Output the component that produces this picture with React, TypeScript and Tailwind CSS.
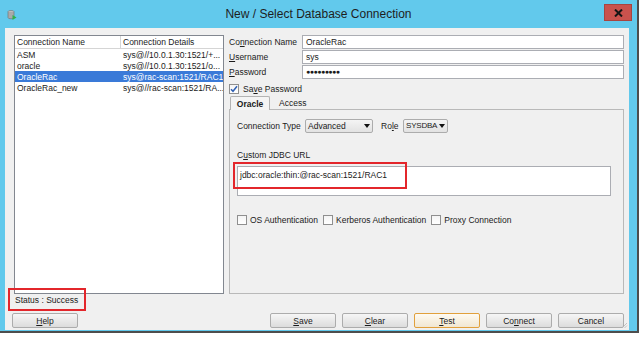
import type { ReactNode } from "react";

const connections = [
  { name: "ASM", details: "sys@//10.0.1.30:1521/+...", selected: false },
  { name: "oracle", details: "sys@//10.0.1.30:1521/o...", selected: false },
  { name: "OracleRac", details: "sys@rac-scan:1521/RAC1", selected: true },
  { name: "OracleRac_new", details: "sys@//rac-scan:1521/RA...", selected: false },
];

// underlined mnemonic letter
const Mn = ({ c }: { c: string }) => (
  <span className="underline decoration-[1px] underline-offset-[1px]">{c}</span>
);

const Checkbox = ({ checked }: { checked?: boolean }) => (
  <span className="flex h-[10px] w-[10px] shrink-0 items-center justify-center border border-[#8f8f8f] bg-linear-to-b from-[#f4f4f4] to-white">
    {checked && (
      <svg width="8" height="8" viewBox="0 0 8 8">
        <path d="M1 4.2 L3 6.3 L7 1.3" fill="none" stroke="#2f5fb3" strokeWidth="1.5" />
      </svg>
    )}
  </span>
);

const Select = ({ value, width, textClass = "" }: { value: string; width: string; textClass?: string }) => (
  <div
    className={`flex h-[14px] ${width} items-center justify-between gap-[1px] rounded-[2px] border border-[#acacac] bg-linear-to-b from-[#f4f4f4] to-[#e2e2e2] pl-[2px] pr-[2px]`}
  >
    <span className={`whitespace-nowrap ${textClass}`}>{value}</span>
    <svg className="shrink-0" width="6" height="4" viewBox="0 0 6 4">
      <path d="M0 0 H6 L3 4 Z" fill="#111" />
    </svg>
  </div>
);

const Btn = ({ children, focus, className = "" }: { children: ReactNode; focus?: boolean; className?: string }) => (
  <div
    className={`flex h-[15px] w-[66px] items-center justify-center rounded-[2px] border ${
      focus
        ? "border-[#e1a03c] bg-linear-to-b from-[#fefaf2] to-[#f1e7d2]"
        : "border-[#acacac] bg-linear-to-b from-[#f6f6f6] to-[#dcdcdc]"
    } ${className}`}
  >
    {children}
  </div>
);

const Field = ({ children }: { children?: ReactNode }) => (
  <div className="flex h-[14px] flex-1 items-center border border-[#abadb3] bg-white pl-[3px]">{children}</div>
);

const App = () => {
  return (
    <div className="relative h-[338px] w-[644px] overflow-hidden bg-white font-['Liberation_Sans',Arial,sans-serif] text-[8.5px] leading-[10px] text-[#1b1b1b]">
      <div className="flex h-[333px] w-[639px] flex-col border-r-2 border-b-2 border-[#4d4d4d] bg-[#62c9ec]">
        {/* title bar */}
        <div className="grid h-[28px] grid-cols-[1fr_auto_1fr]">
          <div className="ml-[7px] mt-[10px] justify-self-start">
            <svg width="10" height="10" viewBox="0 0 10 10">
              <ellipse cx="4" cy="1.8" rx="3" ry="1.3" fill="#c8c8c8" stroke="#6b6b6b" strokeWidth="0.6" />
              <path d="M1 1.8 V7.5 A3 1.3 0 0 0 7 7.5 V1.8" fill="#a9a9a9" stroke="#6b6b6b" strokeWidth="0.6" />
              <path d="M5.5 5 L9.5 7.5 L5.5 10 Z" fill="#2fb24a" />
            </svg>
          </div>
          <div className="flex items-center text-[12px] leading-[14px] text-[#1e1e1e]">New / Select Database Connection</div>
          <div className="mr-[5px] mt-[4px] flex h-[17px] w-[28px] items-center justify-center justify-self-end border border-[#a84440] bg-[#c9524d]">
            <svg width="9" height="8" viewBox="0 0 9 8">
              <path d="M1 0.5 L8 7.5 M8 0.5 L1 7.5" stroke="#151515" strokeWidth="2" />
            </svg>
          </div>
        </div>

        {/* body */}
        <div className="relative ml-[5px] mr-[8px] flex h-[302px] flex-col bg-[#f0f0f0] pl-[7px] pr-[5px] pt-[7px]">
          <div className="flex h-[259px] gap-[5px]">
            {/* connection list */}
            <div className="ml-[2px] flex w-[210px] flex-col border border-[#828790] bg-white">
              <div className="flex h-[13px] border-b border-[#d5d5d5]">
                <div className="flex w-[106px] items-center border-r border-[#d5d5d5] pl-[2px]">Connection Name</div>
                <div className="flex flex-1 items-center pl-[2px]">Connection Details</div>
              </div>
              {connections.map((c) => (
                <div
                  key={c.name}
                  className={`flex h-[11px] items-center whitespace-nowrap ${c.selected ? "bg-[#3a7ad8] text-white" : ""}`}
                >
                  <div className="w-[106px] overflow-hidden pl-[2px]">{c.name}</div>
                  <div className="flex-1 overflow-hidden pl-[2px]">{c.details}</div>
                </div>
              ))}
            </div>

            {/* connection form */}
            <div className="flex flex-1 flex-col">
              <div className="flex flex-col gap-[1px]">
                <div className="flex items-center">
                  <span className="w-[73px]">
                    Co<Mn c="n" />nection Name
                  </span>
                  <Field>OracleRac</Field>
                </div>
                <div className="flex items-center">
                  <span className="w-[73px]">
                    <Mn c="U" />sername
                  </span>
                  <Field>sys</Field>
                </div>
                <div className="flex items-center">
                  <span className="w-[73px]">
                    <Mn c="P" />assword
                  </span>
                  <Field>
                    <span className="text-[7px] font-bold tracking-[-0.5px]">●●●●●●●●●</span>
                  </Field>
                </div>
              </div>

              <div className="mt-[5px] flex h-[10px] items-center">
                <Checkbox checked />
                <span className="ml-[4px]">
                  Sa<Mn c="v" />e Password
                </span>
              </div>

              <div className="relative z-10 mt-[2px] flex h-[13px] items-end pl-[1px]">
                <div className="-mb-[1px] flex h-[14px] w-[40px] items-center justify-center rounded-t-[2px] border border-b-0 border-[#b3b3b3] bg-[#f4f4f4] font-bold">
                  Oracle
                </div>
                <div className="flex h-[12px] items-center pl-[9px]">Access</div>
              </div>

              <div className="flex flex-1 flex-col border border-[#b9b9b9] pl-[7px] pt-[9px]">
                <div className="flex h-[14px] items-center">
                  <span className="w-[68px]">Connection Type</span>
                  <Select value="Advanced" width="w-[68px]" />
                  <span className="ml-[8px] w-[22px]">
                    Ro<Mn c="l" />e
                  </span>
                  <Select value="SYSDBA" width="w-[45px]" textClass="text-[8px] tracking-[-0.2px]" />
                </div>
                <div className="mt-[17px]">
                  C<Mn c="u" />stom JDBC URL
                </div>
                <div className="mr-[12px] mt-[6px] h-[30px] border border-[#abadb3] bg-white pl-[2px] pt-[3px]">
                  jdbc:oracle:thin:@rac-scan:1521/RAC1
                </div>
                <div className="mt-[19px] flex h-[10px] items-center">
                  <Checkbox />
                  <span className="ml-[3px]">OS Authentication</span>
                  <span className="ml-[5px]">
                    <Checkbox />
                  </span>
                  <span className="ml-[3px]">Kerberos Authentication</span>
                  <span className="ml-[5px]">
                    <Checkbox />
                  </span>
                  <span className="ml-[3px]">Proxy Connection</span>
                </div>
              </div>
            </div>
          </div>

          <div className="h-[17px] pl-[3px] pt-[1px]">Status : Success</div>

          <div className="mt-[2px] flex">
            <Btn>
              <span>
                <Mn c="H" />elp
              </span>
            </Btn>
            <div className="ml-auto flex gap-[6px]">
              <Btn>
                <span>
                  <Mn c="S" />ave
                </span>
              </Btn>
              <Btn>
                <span>
                  <Mn c="C" />lear
                </span>
              </Btn>
              <Btn focus>
                <span>
                  <Mn c="T" />est
                </span>
              </Btn>
              <Btn>
                <span>
                  Co<Mn c="n" />nect
                </span>
              </Btn>
              <Btn>Cancel</Btn>
            </div>
          </div>

          {/* resize grip */}
          <svg className="absolute bottom-[1px] right-[1px]" width="7" height="7" viewBox="0 0 7 7">
            <path d="M6 1 L1 6 M6 3.5 L3.5 6" stroke="#b5b5b5" strokeWidth="0.8" />
          </svg>
        </div>
      </div>

      {/* red annotation boxes */}
      <div className="absolute left-[8px] top-[288px] h-[23px] w-[78px] border-2 border-[#e3262b]" />
      <div className="absolute left-[233px] top-[162px] h-[27px] w-[174px] border-2 border-[#e3262b]" />
    </div>
  );
};

export default App;
